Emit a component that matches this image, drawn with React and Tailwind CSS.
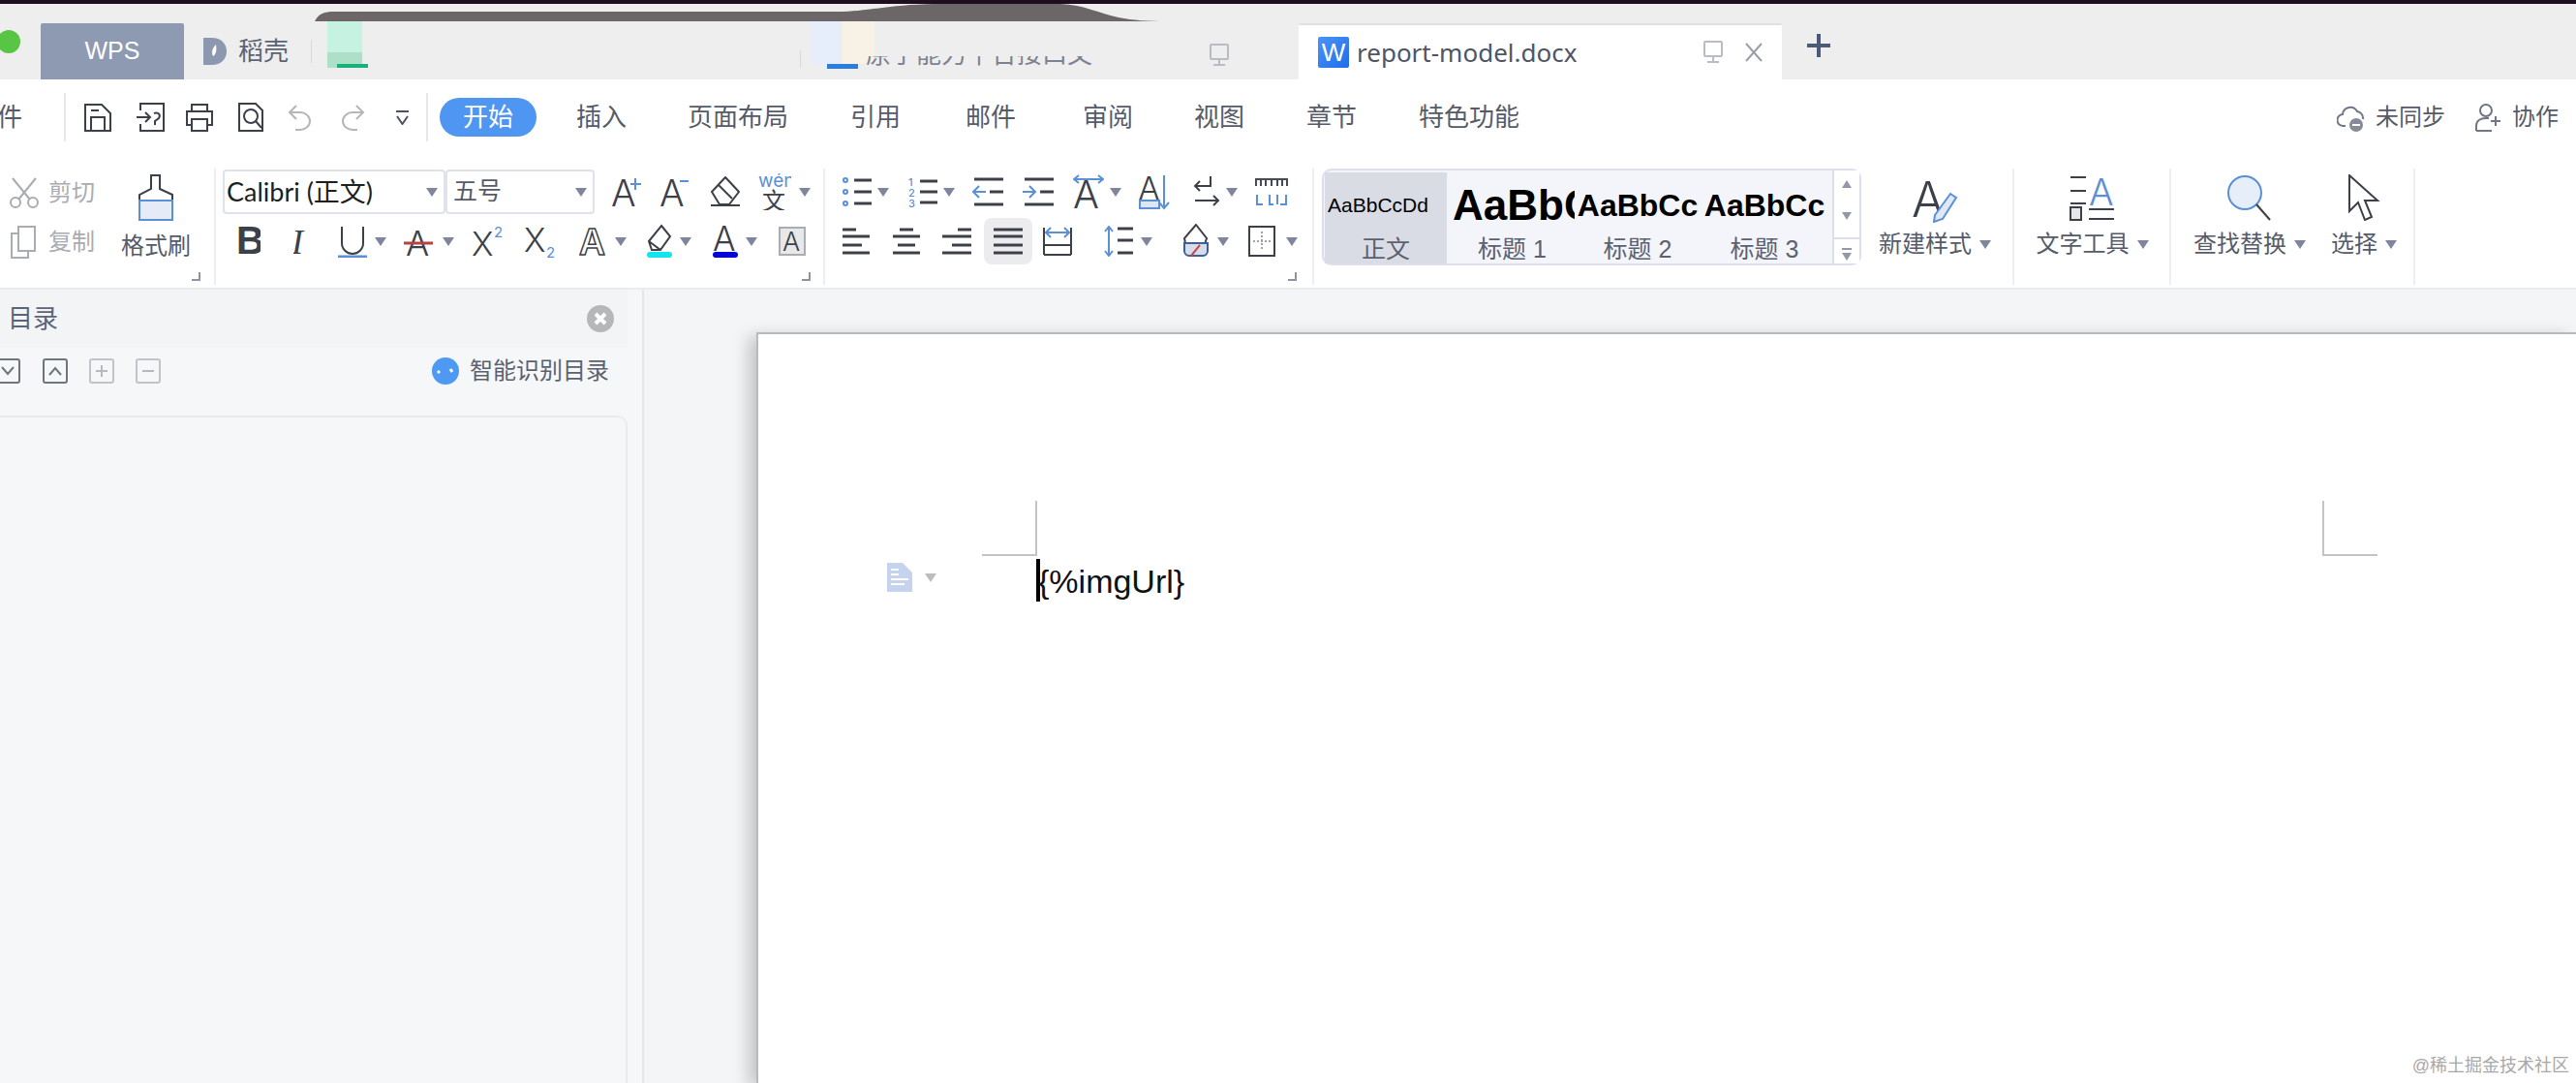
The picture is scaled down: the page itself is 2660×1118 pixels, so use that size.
import React from 'react'

const INK = '#3c4049'
const BLUE = '#5b8fd6'

// thin svg wrapper, viewBox == pixel size
function S({ w, h, c = INK, sw = 2, className = '', children }) {
  return (
    <svg width={w} height={h} viewBox={`0 0 ${w} ${h}`} fill="none" stroke={c} strokeWidth={sw} className={'shrink-0 ' + className}>
      {children}
    </svg>
  )
}

function T({ x, y, size, fill = INK, weight = 300, style, family = 'Inter', outline, children }) {
  return (
    <text x={x} y={y} fontSize={size} fill={fill} stroke={outline || 'none'} strokeWidth={outline ? 1.5 : 0} fontWeight={weight} fontStyle={style} fontFamily={family}>
      {children}
    </text>
  )
}

function Caret({ className = '' }) {
  return (
    <span className={'shrink-0 w-0 h-0 border-x-[6px] border-t-[9px] border-x-transparent border-t-[#7f859c] ' + className} />
  )
}

function Corner({ className = '' }) {
  return <span className={'absolute w-[9px] h-[9px] border-r-2 border-b-2 border-[#8d93a3] ' + className} />
}

function Lines({ rows, c = INK, sw = 3 }) {
  return rows.map(([x1, x2, y], i) => <path key={i} d={`M${x1} ${y}H${x2}`} stroke={c} strokeWidth={sw} />)
}

function Monitor({ className = '' }) {
  return (
    <S w={22} h={24} c="#b9bcc5" className={className}>
      <rect x="2" y="1" width="18" height="15" rx="1" />
      <path d="M11 16v6M5 22h12" />
    </S>
  )
}

function TabBar() {
  return (
    <div className="relative flex items-center h-[78px] bg-[#eeeeee]">
      <span className="shrink-0 -ml-[3px] w-[24px] h-[24px] rounded-full bg-[#59c544]" />
      <div className="shrink-0 ml-[21px] w-[148px] h-[58px] self-end flex items-center justify-center bg-[#8e9ab2] rounded-t-[2px] text-white text-[25px]">WPS</div>
      <svg width="24" height="28" viewBox="0 0 24 28" className="shrink-0 ml-[20px] mt-[20px]">
        <path d="M0 0h9c9 0 15 6 15 14s-6 14-15 14H0z" fill="#8b98b0" />
        <path d="M13 7c-4 4-5 8-3 12 3-2 4-6 3-12z" fill="#fff" />
      </svg>
      <span className="ml-[12px] mt-[20px] text-[26px] text-[#5c6372]">稻壳</span>
      <span className="ml-[23px] mt-[20px] w-px h-[24px] bg-[#d8d8d8]" />
      {/* smeared tabs in the original capture */}
      <div className="relative shrink-0 w-[1019px] h-full">
        <svg width="880" height="20" viewBox="0 0 880 20" className="absolute left-[3px] top-0">
          <path d="M0 18C4 10 10 8 20 8H540C570 8 590 1 640 0H770C795 1 810 10 830 14C845 17 860 18 880 18Z" fill="#6c6669" />
        </svg>
        <span className="absolute left-[16px] top-[18px] w-[36px] h-[44px] bg-[#c6f3e1]" />
        <span className="absolute left-[16px] top-[50px] w-[36px] h-[16px] bg-[#aee0c7]" />
        <span className="absolute left-[26px] top-[62px] w-[32px] h-[4px] bg-[#17b27b]" />
        <span className="absolute left-[504px] top-[48px] w-px h-[18px] bg-[#d8d8d8]" />
        <span className="absolute left-[516px] top-[18px] w-[30px] h-[44px] bg-[#e6edfb]" />
        <span className="absolute left-[548px] top-[18px] w-[33px] h-[44px] bg-[#f7f1e6]" />
        <span className="absolute left-[532px] top-[62px] w-[32px] h-[5px] bg-[#2a7de1]" />
        <div className="absolute left-[572px] top-[54px] w-[236px] h-[11px] overflow-hidden">
          <p className="-mt-[20px] text-[26px] leading-[36px] whitespace-nowrap text-[#7c8290]">原子能力平台接口文</p>
        </div>
        <Monitor className="absolute left-[926px] top-[41px]" />
      </div>
      <div className="shrink-0 w-[499px] h-[58px] self-end flex items-center bg-white border-t-2 border-[#e0e0e3] rounded-t-[2px]">
        <span className="ml-[20px] w-[32px] h-[32px] flex items-center justify-center rounded-[2px] bg-gradient-to-br from-[#4a94f5] to-[#1f6cec] text-white text-[26px] font-light">W</span>
        <span className="ml-[8px] text-[26px] text-[#4f5565] font-['Noto_Sans']">report-model.docx</span>
        <Monitor className="ml-[130px]" />
        <S w={20} h={20} c="#9b9fab" className="ml-[21px]"><path d="M2 1l16 18M18 1L2 19" /></S>
      </div>
      <S w={26} h={26} c="#4c5a78" sw={4} className="ml-[25px] mt-[8px]"><path d="M13 1v24M1 13h24" /></S>
    </div>
  )
}

const TABS = [
  ['插入', 'ml-[41px]'],
  ['页面布局', 'ml-[63px]'],
  ['引用', 'ml-[64px]'],
  ['邮件', 'ml-[67px]'],
  ['审阅', 'ml-[69px]'],
  ['视图', 'ml-[63px]'],
  ['章节', 'ml-[64px]'],
  ['特色功能', 'ml-[64px]'],
]

function MenuRow() {
  return (
    <div className="flex items-center h-[76px] pt-[2px] bg-white text-[26px] text-[#555b69]">
      <span className="-ml-[3px] w-[29px] shrink-0">件</span>
      <span className="ml-[40px] w-[2px] h-[50px] bg-[#e6e7ea]" />
      {/* quick access */}
      <S w={30} h={30} className="ml-[18px]"><path d="M2 2h17l9 9v18H2zM8 29V15h14v14M8 8h8" /></S>
      <S w={30} h={32} className="ml-[25px]"><path d="M4 9V2h24v28H4v-7M0 16h13M9 11l5 5-5 5M18 12c5-2 7 2 5 5l-4 3v4" /></S>
      <S w={30} h={30} className="ml-[20px]"><path d="M7 9V2h16v7M7 23H2V9h26v14h-5M7 17h16v12H7z" /></S>
      <S w={28} h={32} className="ml-[24px]"><path d="M2 2h17l7 7v21H2z" /><circle cx="14" cy="15" r="7" /><path d="M19 20l6 7" /></S>
      <S w={26} h={28} c="#b4b6bb" className="ml-[24px]"><path d="M9 2L2 9l7 7M2 9h11a10 9 0 0 1 0 18H8" /></S>
      <S w={26} h={28} c="#b4b6bb" className="ml-[28px]"><path d="M17 2l7 7-7 7M24 9H13a10 9 0 0 0 0 18h5" /></S>
      <S w={15} h={16} c="#4d525e" className="ml-[31px]"><path d="M1 2h13M2 7l5.500 8L13 7" /></S>
      <span className="ml-[17px] w-[2px] h-[50px] bg-[#e6e7ea]" />
      <span className="ml-[12px] w-[100px] h-[40px] rounded-full bg-[#4f96f2] text-white flex items-center justify-center">开始</span>
      {TABS.map(([t, m]) => <span key={t} className={m + ' shrink-0'}>{t}</span>)}
      <div className="ml-auto flex items-center text-[24px] mr-[18px]">
        <S w={32} h={32} c="#6f7685">
          <path d="M9 25H7a6 6 0 0 1-1-12 8 8 0 0 1 15-3 7 7 0 0 1 6 8" />
          <circle cx="20" cy="24" r="7" fill="#868b97" stroke="none" />
          <path d="M16 24h8" stroke="#fff" />
        </S>
        <span className="ml-[8px]">未同步</span>
        <S w={30} h={30} c="#6f7685" className="ml-[30px]">
          <circle cx="12" cy="8" r="6" /><path d="M2 29v-5c0-5 4-8 10-8h3M2 29h16M22 14v10M17 19h10" />
        </S>
        <span className="ml-[9px]">协作</span>
      </div>
    </div>
  )
}

function Clipboard() {
  return (
    <div className="relative shrink-0 flex w-[223px] h-[120px] border-r-2 border-[#eceef1]">
      <div className="w-[115px] text-[24px] text-[#a9acb2]">
        <div className="flex items-center h-[46px] mt-[2px]">
          <S w={30} h={32} c="#a9acb2" className="ml-[10px]">
            <path d="M3 1l18 22M27 1L9 23" /><circle cx="6" cy="26" r="5" /><circle cx="24" cy="26" r="5" />
          </S>
          <span className="ml-[10px]">剪切</span>
        </div>
        <div className="flex items-center h-[48px] mt-[4px]">
          <S w={30} h={34} c="#a9acb2" className="ml-[10px]">
            <path d="M9 1h17v25H9zM9 8H2v25h17v-7" />
          </S>
          <span className="ml-[10px]">复制</span>
        </div>
      </div>
      <div className="w-[92px] flex flex-col items-center text-[24px] text-[#555b69]">
        <S w={38} h={48} className="mt-[6px]">
          <path d="M14 1h9v14l13 6v6H2v-6l12-6z" />
          <rect x="2" y="27" width="34" height="20" fill="#e6ecf7" stroke={BLUE} />
        </S>
        <span className="mt-[8px] whitespace-nowrap">格式刷</span>
      </div>
      <Corner className="right-[14px] bottom-[4px]" />
    </div>
  )
}

function Combo({ w, children, className = '' }) {
  return (
    <div className={w + ' ' + className + ' h-[46px] flex items-center border-2 border-[#dfe1ec] rounded-[4px]'}>{children}</div>
  )
}

function FontGroup() {
  return (
    <div className="relative shrink-0 w-[629px] h-[120px] border-r-2 border-[#eceef1]">
      <div className="flex items-center h-[46px] mt-[1px]">
        <Combo w="w-[230px]" className="ml-[7px]">
          <span className="ml-[2px] text-[27px] text-[#1e1f22] font-['Lato','Noto_Sans_CJK_SC',sans-serif] whitespace-nowrap">Calibri (正文)</span>
          <Caret className="ml-auto mr-[6px]" />
        </Combo>
        <Combo w="w-[154px]">
          <span className="ml-[6px] text-[25px] text-[#555b69]">五号</span>
          <Caret className="ml-auto mr-[6px]" />
        </Combo>
        <S w={32} h={34} className="ml-[17px]"><T x="0" y="32" size="38">A</T><path d="M25 3v12M20 9h11" stroke={BLUE} /></S>
        <S w={30} h={34} className="ml-[18px]"><T x="0" y="32" size="38">A</T><path d="M21 6h9" stroke={BLUE} /></S>
        <S w={30} h={32} className="ml-[23px]">
          <path d="M15 1l14 15-10 13H9L1 16z" />
          <path d="M8 9l14 14" />
          <path d="M0 30h30" />
        </S>
        <S w={34} h={38} className="ml-[19px]">
          <T x="0" y="14" size="19" fill={BLUE} weight={400}>wén</T>
          <T x="4" y="37" size="24" weight={400} family="Noto Sans CJK SC">文</T>
        </S>
        <Caret className="ml-[8px]" />
      </div>
      <div className="flex items-center h-[48px] mt-[4px]">
        <S w={24} h={32} className="ml-[22px]"><T x="-1" y="29" size="40" weight={700} family="Liberation Sans">B</T></S>
        <S w={16} h={32} className="ml-[34px]"><T x="-2" y="29" size="36" style="italic" family="Liberation Serif" weight={400}>I</T></S>
        <S w={30} h={34} className="ml-[30px]"><path d="M4 2v17a11 11 0 0 0 22 0V2" /><path d="M0 33h30" stroke={BLUE} strokeWidth={3} /></S>
        <Caret className="ml-[8px]" />
        <S w={30} h={34} className="ml-[18px]"><T x="2" y="32" size="36">A</T><path d="M0 19h30" stroke="#b9423f" strokeWidth={3} /></S>
        <Caret className="ml-[10px]" />
        <S w={34} h={34} className="ml-[18px]"><T x="0" y="32" size="34">X</T><T x="23" y="13" size="15" fill={BLUE} weight={400}>2</T></S>
        <S w={34} h={34} className="ml-[20px]"><T x="0" y="28" size="34">X</T><T x="23" y="34" size="15" fill={BLUE} weight={400}>2</T></S>
        <S w={28} h={32} className="ml-[22px]"><T x="1" y="30" size="37" weight={600} fill="#fff" outline={INK}>A</T></S>
        <Caret className="ml-[10px]" />
        <S w={28} h={36} className="ml-[20px]"><path d="M16 2l9 11-10 14H6l-3-9zM3 18l12 9" /><rect x="1" y="29" width="26" height="6" rx="3" fill="#11e6ee" stroke="none" /></S>
        <Caret className="ml-[7px]" />
        <S w={28} h={36} className="ml-[21px]"><T x="1" y="28" size="35">A</T><rect x="1" y="29" width="26" height="6" rx="3" fill="#0404d8" stroke="none" /></S>
        <Caret className="ml-[7px]" />
        <S w={28} h={30} c="#a9acb2" className="ml-[22px]"><rect x="1" y="1" width="26" height="28" fill="#e8e8e8" /><T x="4" y="25" size="27">A</T></S>
      </div>
      <Corner className="right-[13px] bottom-[4px]" />
    </div>
  )
}

function ParagraphGroup() {
  return (
    <div className="relative shrink-0 w-[505px] h-[120px] border-r-2 border-[#eceef1]">
      <div className="flex items-center h-[46px] mt-[1px]">
        <S w={30} h={30} className="ml-[18px]">
          <circle cx="3" cy="3" r="2" stroke={BLUE} /><circle cx="3" cy="15" r="2" stroke={BLUE} /><circle cx="3" cy="27" r="2" stroke={BLUE} />
          <Lines rows={[[12, 30, 3], [12, 30, 15], [12, 30, 27]]} />
        </S>
        <Caret className="ml-[6px]" />
        <S w={30} h={32} className="ml-[20px]">
          <T x="0" y="10" size="11" fill={BLUE} weight={500}>1</T><T x="0" y="21" size="11" fill={BLUE} weight={500}>2</T><T x="0" y="32" size="11" fill={BLUE} weight={500}>3</T>
          <Lines rows={[[12, 30, 5], [12, 30, 16], [12, 30, 27]]} />
        </S>
        <Caret className="ml-[6px]" />
        <S w={32} h={30} className="ml-[18px]"><Lines rows={[[2, 32, 2], [18, 32, 15], [2, 32, 28]]} /><path d="M14 15H2M7 9l-6 6 6 6" stroke={BLUE} /></S>
        <S w={32} h={30} className="ml-[20px]"><Lines rows={[[2, 32, 2], [18, 32, 15], [2, 32, 28]]} /><path d="M0 15h12M7 9l6 6-6 6" stroke={BLUE} /></S>
        <S w={32} h={36} className="ml-[20px]"><T x="0" y="35" size="40">A</T><path d="M2 5h28M6 1L1 5l5 4M26 1l5 4-5 4" stroke={BLUE} /></S>
        <Caret className="ml-[6px]" />
        <S w={33} h={38} className="ml-[17px]"><T x="0" y="28" size="34">A</T><path d="M2 28h20v8H2z" fill="#dde6f5" stroke={BLUE} /><path d="M27 2v34M22 30l5 6 5-6" stroke={BLUE} /></S>
        <S w={30} h={34} className="ml-[22px]"><path d="M20 1v10H4M9 6l-5 5 5 5M4 26h24M23 21l5 5-5 5" /></S>
        <Caret className="ml-[6px]" />
        <S w={34} h={30} c="#454a55" className="ml-[18px]">
          <path d="M1 9V2h32v7M6 2v7M11 2v7M17 2v7M23 2v7M28 2v7" />
          <path d="M2 18v10h6M15 18v10h4M32 18v10h-6M23 18v10" stroke={BLUE} />
        </S>
      </div>
      <div className="flex items-center h-[48px] mt-[4px]">
        <S w={28} h={28} className="ml-[18px]"><Lines rows={[[0, 14, 2], [0, 28, 9], [0, 20, 18], [0, 28, 26]]} /></S>
        <S w={28} h={28} className="ml-[24px]"><Lines rows={[[7, 21, 2], [0, 28, 9], [5, 23, 18], [0, 28, 26]]} /></S>
        <S w={30} h={28} className="ml-[23px]"><Lines rows={[[16, 30, 2], [0, 30, 9], [10, 30, 18], [0, 30, 26]]} /></S>
        <div className="ml-[13px] w-[50px] h-[48px] flex items-center justify-center rounded-[8px] bg-[#ececee]">
          <S w={30} h={28}><Lines rows={[[0, 30, 2], [0, 30, 9], [0, 30, 18], [0, 30, 26]]} /></S>
        </div>
        <S w={32} h={32} className="ml-[10px]"><path d="M2 2v28M30 2v28M2 30h28M2 20h28" /><path d="M4 7h24M9 2L4 7l5 5M23 2l5 5-5 5" stroke={BLUE} /></S>
        <S w={30} h={32} className="ml-[32px]"><path d="M5 2v28M1 6l4-5 4 5M1 26l4 5 4-5" stroke={BLUE} /><Lines rows={[[14, 30, 3], [14, 30, 15], [14, 30, 28]]} /></S>
        <Caret className="ml-[8px]" />
        <S w={30} h={36} className="ml-[30px]"><path d="M15 1l11 14-5 15H6L3 15z" /><path d="M3 20h24v8a5 5 0 0 1-5 5H8a5 5 0 0 1-5-5z" fill="#d5dded" stroke="#3f5f95" /><path d="M10 33l9-11" stroke="#c54a46" /></S>
        <Caret className="ml-[7px]" />
        <S w={30} h={32} className="ml-[19px]"><path d="M2 1h26v30H2z" /><path d="M15 6v20M6 16h18" stroke="#9ea2ab" strokeDasharray="2 2" /></S>
        <Caret className="ml-[10px]" />
      </div>
      <Corner className="right-[16px] bottom-[4px]" />
    </div>
  )
}

function StyleCell({ w, label, preview, active, clip }) {
  return (
    <div className={w + ' h-[94px] flex flex-col items-center ' + (active ? 'bg-[#d9dce4]' : '')}>
      <div className={'h-[62px] w-full pt-[5px] flex items-center text-black font-["Liberation_Sans"] whitespace-nowrap ' + (clip ? 'overflow-hidden pl-[3px] pr-[5px]' : 'justify-center')}>
        {preview}
      </div>
      <span className="mt-[2px] text-[25px] leading-[30px] text-[#5b6170]">{label}</span>
    </div>
  )
}

function StylesGroup() {
  return (
    <div className="relative shrink-0 flex w-[723px] h-[120px] border-r-2 border-[#eceef1]">
      <div className="shrink-0 ml-[8px] w-[557px] h-[100px] flex items-start pt-[2px] pl-[1px] border-2 border-[#dcdeeb] rounded-[10px] bg-[#f4f5fa]">
        <StyleCell w="w-[126px]" active label="正文" preview={<span className="text-[21px] -ml-[16px]">AaBbCcDd</span>} />
        <div className="w-[3px]" />
        <StyleCell w="w-[129px]" clip label="标题 1" preview={<span className="text-[44px] font-bold">AaBbCc</span>} />
        <StyleCell w="w-[130px]" label="标题 2" preview={<span className="text-[32px] font-bold">AaBbCc</span>} />
        <StyleCell w="w-[132px]" label="标题 3" preview={<span className="text-[32px] font-bold">AaBbCc</span>} />
        <div className="ml-[4px] w-[28px] h-[96px] -mt-[2px] flex flex-col items-center bg-white border-l-2 border-[#dcdeeb]">
          <span className="mt-[10px] w-0 h-0 border-x-[5px] border-b-[8px] border-x-transparent border-b-[#9298a8]" />
          <span className="mt-[25px] w-0 h-0 border-x-[5px] border-t-[8px] border-x-transparent border-t-[#9298a8]" />
          <span className="mt-[18px] w-full h-[2px] bg-[#dcdeeb]" />
          <span className="mt-[9px] w-[10px] h-[2px] bg-[#9298a8]" />
          <span className="mt-[3px] w-0 h-0 border-x-[5px] border-t-[8px] border-x-transparent border-t-[#9298a8]" />
        </div>
      </div>
      <div className="ml-[18px] flex flex-col items-center">
        <S w={48} h={48} className="mt-[8px]">
          <T x="0" y="42" size="50">A</T>
          <path d="M24 40l16-22 6 4-14 22-9 3z" fill="#dfe8f6" stroke={BLUE} />
        </S>
        <ToolLabel className="mt-[8px]">新建样式</ToolLabel>
      </div>
    </div>
  )
}

function ToolLabel({ children, className = '' }) {
  return (
    <div className={'flex items-center text-[24px] leading-[28px] text-[#555b69] whitespace-nowrap ' + className}>
      {children}
      <Caret className="ml-[8px]" />
    </div>
  )
}

function ToolsGroups() {
  return (
    <>
      <div className="shrink-0 w-[162px] h-[120px] flex flex-col items-center pl-[1px] border-r-2 border-[#eceef1]">
        <S w={48} h={48} className="mt-[6px]">
          <path d="M1 3h16M1 17h16M1 30h16" />
          <T x="20" y="32" size="38" fill={BLUE}>A</T>
          <rect x="1" y="34" width="11" height="13" fill="#e6e7ea" /><path d="M20 36h26M20 46h26" />
        </S>
        <ToolLabel className="mt-[10px]">文字工具</ToolLabel>
      </div>
      <div className="shrink-0 w-[252px] h-[120px] flex pl-[23px] border-r-2 border-[#eceef1]">
        <div className="flex flex-col items-center">
          <S w={48} h={48} className="mt-[6px]">
            <circle cx="19" cy="19" r="17" fill="#e6eefa" stroke={BLUE} />
            <path d="M31 31l14 16" />
          </S>
          <ToolLabel className="mt-[10px]">查找替换</ToolLabel>
        </div>
        <div className="ml-[26px] flex flex-col items-center">
          <S w={36} h={48} className="mt-[6px]"><path d="M3 1v37l9-9 7 18 7-3-7-17h13z" /></S>
          <ToolLabel className="mt-[10px]">选择</ToolLabel>
        </div>
      </div>
    </>
  )
}

function TocButton({ dim, children, className = '' }) {
  return (
    <span className={'shrink-0 w-[26px] h-[26px] flex items-center justify-center rounded-[3px] border-2 ' + (dim ? 'border-[#c2c4c9] ' : 'border-[#70747d] ') + className}>
      {children}
    </span>
  )
}

function TocPanel() {
  return (
    <div className="shrink-0 w-[663px] flex flex-col bg-[#f5f7f9]">
      <div className="w-[648px] h-[60px] flex items-center justify-between bg-[#f2f4f6]">
        <span className="ml-[8px] text-[26px] text-[#5b6478]">目录</span>
        <span className="mr-[14px] w-[28px] h-[28px] flex items-center justify-center rounded-full bg-[#b6b7b9]">
          <S w={14} h={14} c="#fff" sw={4}><path d="M2 2l10 10M12 2L2 12" /></S>
        </span>
      </div>
      <div className="flex items-center h-[28px] mt-[10px] w-[648px]">
        <TocButton className="-ml-[5px]"><S w={14} h={10} c="#70747d"><path d="M1 1l6 7 6-7" /></S></TocButton>
        <TocButton className="ml-[23px]"><S w={14} h={10} c="#70747d"><path d="M1 9l6-7 6 7" /></S></TocButton>
        <TocButton dim className="ml-[22px]"><S w={12} h={12} c="#b6b8bd"><path d="M6 0v12M0 6h12" /></S></TocButton>
        <TocButton dim className="ml-[22px]"><S w={12} h={12} c="#b6b8bd"><path d="M0 6h12" /></S></TocButton>
        <span className="ml-[280px] shrink-0 w-[28px] h-[28px] rounded-full bg-[#4e9af3] flex items-center justify-center">
          <S w={20} h={10} c="#fff" sw={3}><path d="M2 7l2-2M15 3l2 3" /></S>
        </span>
        <span className="ml-[11px] text-[24px] text-[#5b6170] whitespace-nowrap">智能识别目录</span>
      </div>
      <div className="mt-[32px] w-[648px] flex-1 border-t-2 border-r-2 border-[#e9ebee] rounded-tr-[10px]" />
    </div>
  )
}

function Page() {
  return (
    <div className="ml-[116px] mt-[44px] flex-1 bg-white border-t-2 border-l-2 border-[#b9babc] shadow-[-8px_4px_16px_rgba(0,0,0,0.2)]">
      <div className="flex justify-between ml-[231px] mr-[205px] mt-[172px]">
        <span className="w-[57px] h-[57px] border-r-2 border-b-2 border-[#c4c4c4]" />
        <span className="w-[57px] h-[57px] border-l-2 border-b-2 border-[#c4c4c4]" />
      </div>
      <div className="flex items-center h-[44px] mt-[3px]">
        <svg width="26" height="30" viewBox="0 0 26 30" className="shrink-0 ml-[133px] -mt-[6px]">
          <path d="M0 0h16l10 10v20H0z" fill="#c5d3ee" />
          <path d="M4 7h8M4 12h8M4 17h18M4 22h14" stroke="#fff" strokeWidth="2" />
        </svg>
        <Caret className="ml-[13px] -mt-[6px] border-t-[#bdbdbd]" />
        <span className="ml-[103px] w-[4px] h-[44px] bg-black" />
        <span className="-ml-[2px] pt-[2px] text-[34px] leading-[44px] text-[#111] font-['Liberation_Sans'] whitespace-nowrap">{'{%imgUrl}'}</span>
      </div>
    </div>
  )
}

export default function App() {
  return (
    <div className="relative w-[2660px] h-[1118px] overflow-hidden flex flex-col bg-[#f4f5f7] font-['Liberation_Sans','Noto_Sans_CJK_SC',sans-serif]">
      <div className="h-[4px] shrink-0 bg-[#1e0f1e]" />
      <TabBar />
      <MenuRow />
      <div className="flex h-[141px] shrink-0 pt-[16px] bg-white border-b-2 border-[#e9ebee]">
        <Clipboard />
        <FontGroup />
        <ParagraphGroup />
        <StylesGroup />
        <ToolsGroups />
      </div>
      <div className="flex flex-1 min-h-0">
        <TocPanel />
        <div className="flex flex-1 border-l-2 border-[#e4e6e9]">
          <Page />
        </div>
      </div>
      <span className="absolute right-[7px] bottom-[4px] text-[18px] text-[#a8a8a8] whitespace-nowrap">@稀土掘金技术社区</span>
    </div>
  )
}
